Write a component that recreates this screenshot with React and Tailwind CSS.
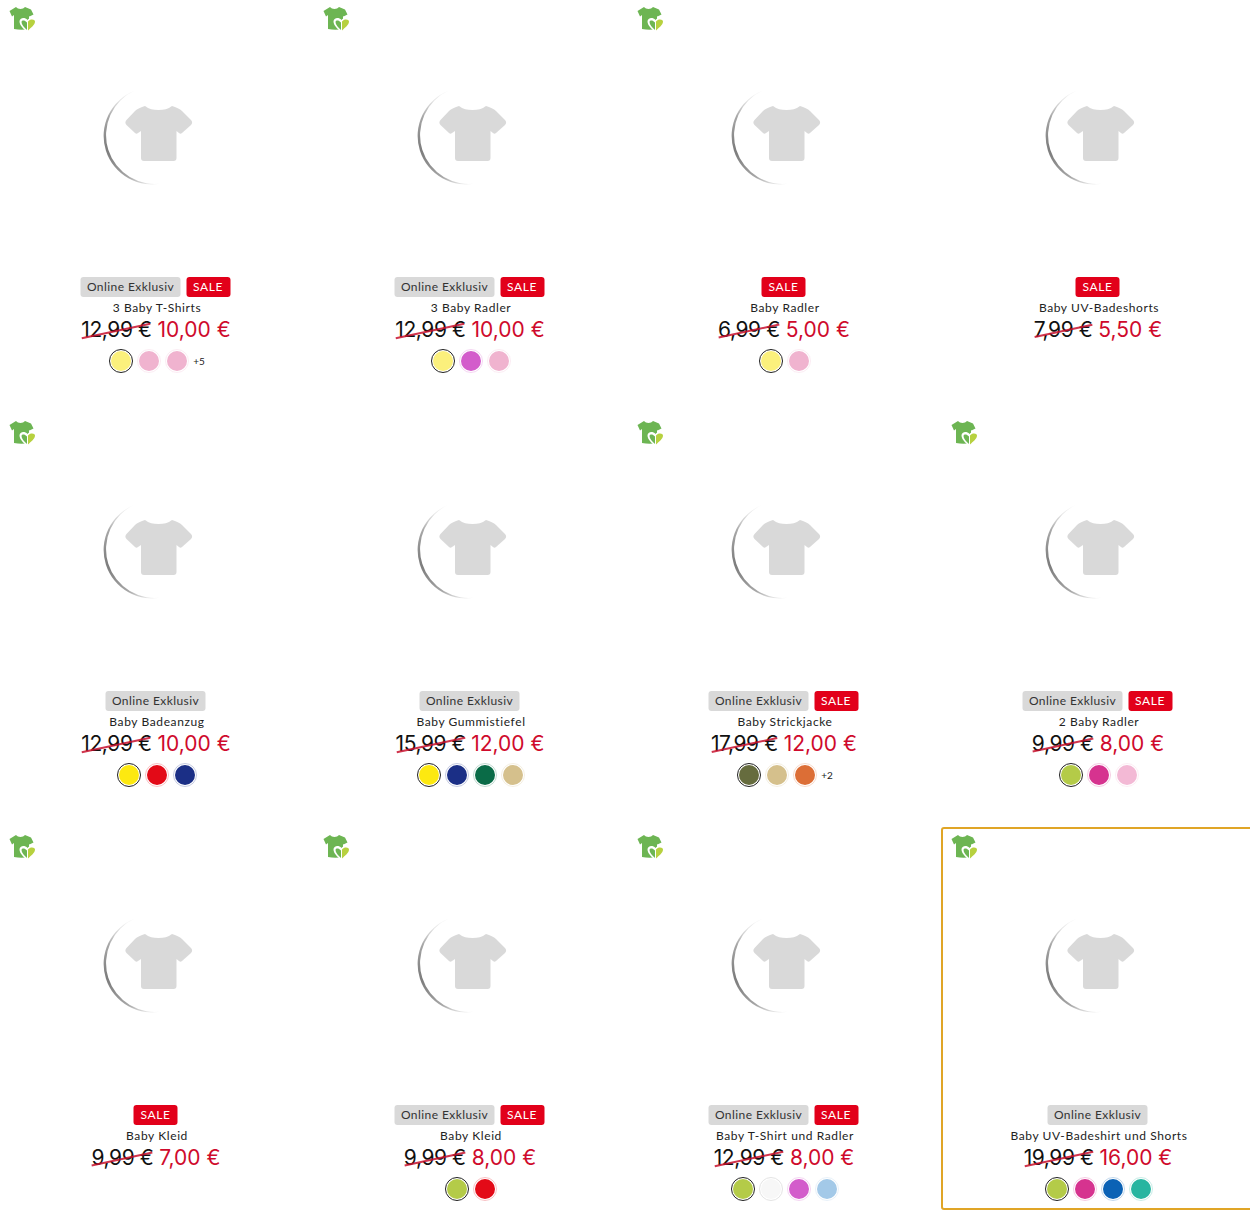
import React from "react";

const YELLOW = "#fbf07c";
const PINK = "#f0b3cf";
const ORCHID = "#d35ccb";
const LIME = "#b4cb48";
const MAGENTA = "#d6338f";
const RED = "#e30a17";
const NAVY = "#1b2f86";
const BRIGHT = "#fde910";
const TAN = "#d5c08c";
const WHITE = "#f7f7f7";

const products = [
    { logo: true, online: true, sale: true, title: "3 Baby T-Shirts", old: "12,99 €", price: "10,00 €", colors: [YELLOW, PINK, PINK], more: "+5" },
    { logo: true, online: true, sale: true, title: "3 Baby Radler", old: "12,99 €", price: "10,00 €", colors: [YELLOW, ORCHID, PINK] },
    { logo: true, sale: true, title: "Baby Radler", old: "6,99 €", price: "5,00 €", colors: [YELLOW, PINK] },
    { sale: true, title: "Baby UV-Badeshorts", old: "7,99 €", price: "5,50 €", colors: [] },
    { logo: true, online: true, title: "Baby Badeanzug", old: "12,99 €", price: "10,00 €", colors: [BRIGHT, RED, NAVY] },
    { online: true, title: "Baby Gummistiefel", old: "15,99 €", price: "12,00 €", colors: [BRIGHT, NAVY, "#0a6b47", TAN] },
    { logo: true, online: true, sale: true, title: "Baby Strickjacke", old: "17,99 €", price: "12,00 €", colors: ["#666c3e", TAN, "#dc6e36"], more: "+2" },
    { logo: true, online: true, sale: true, title: "2 Baby Radler", old: "9,99 €", price: "8,00 €", colors: [LIME, MAGENTA, "#f3b9d5"] },
    { logo: true, sale: true, title: "Baby Kleid", old: "9,99 €", price: "7,00 €", colors: [] },
    { logo: true, online: true, sale: true, title: "Baby Kleid", old: "9,99 €", price: "8,00 €", colors: [LIME, RED] },
    { logo: true, online: true, sale: true, title: "Baby T-Shirt und Radler", old: "12,99 €", price: "8,00 €", colors: [LIME, WHITE, ORCHID, "#a3c9e8"] },
    { logo: true, online: true, title: "Baby UV-Badeshirt und Shorts", old: "19,99 €", price: "16,00 €", colors: [LIME, MAGENTA, "#0b62b5", "#27b5a0"], active: true },
];

function EcoLogo() {
    return (
        <svg width="27" height="27" viewBox="0 0 27 27" className="absolute left-[8px] top-[5px]">
            <path d="M0.5 5 L7 1 C9 3.5 14 3.5 16 1 L22 3.5 L24.5 8.5 L20.5 10.5 L20 10 L20 23 C15 24 10 24 5 23 L5 9 L3 10.5 Z" fill="#6db553" />
            <path d="M18.5 26.5 C14 22.5 10.5 19 10.5 15.5 C10.5 12 15.5 10.5 18.5 14 C21.5 10.5 26.5 12 26.5 15.5 C26.5 19 23 22.5 18.5 26.5 Z" fill="#ffffff" />
            <path d="M18 24 C15 21.5 12.5 18.5 12.5 16 C12.5 14 15.5 13.5 18 16.5 Z" fill="#6db553" />
            <path d="M19 24.5 C22 21.5 26 19 26 15.5 C26 13 21 12.5 19 15.5 Z" fill="#b7d13f" />
        </svg>
    );
}

function Placeholder({ id }) {
    return (
        <svg width="100" height="100" viewBox="0 0 100 100" className="block">
            <defs>
                <radialGradient id={id} gradientUnits="userSpaceOnUse" cx="10" cy="62" r="66">
                    <stop offset="0" stopColor="#777777" />
                    <stop offset="0.5" stopColor="#a8a8a8" />
                    <stop offset="1" stopColor="#e8e8e8" stopOpacity="0" />
                </radialGradient>
            </defs>
            <path d="M33 3.6 A48.5 48.5 0 0 0 62 96 A48.74 48.74 0 0 1 33 3.6 Z" fill={`url(#${id})`} />
            <path d="M43 19 C47 22 51 23 56.5 23 C62 23 66 22 70 19 C74 20 78 22 80 24 L89 33 C90.5 35 90.5 36 89 38 L80 46 C79 47 78 47 77 46 L74.5 44 L74.5 71 C74.5 73 73.5 74 71.5 74 L42 74 C40 74 39 73 39 71 L39 44 L36 46 C35 47 34 47 33 46 L24.5 38 C23 36 23 35 24.5 33 L33 24 C35 22 39 20 43 19 Z" fill="#d9d9d9" />
        </svg>
    );
}

function Swatch({ color, selected }) {
    return (
        <span
            className={`flex h-6 w-6 items-center justify-center rounded-full ${
                selected ? "border border-[#222222]" : "border border-[#e4e4e4]"
            }`}
            style={selected || color === WHITE ? undefined : { borderColor: `${color}40` }}
        >
            <span className="h-5 w-5 rounded-full" style={{ backgroundColor: color }} />
        </span>
    );
}

function ProductCard({ product, index }) {
    return (
        <div
            className={`relative -mx-px flex h-[383px] flex-col items-center rounded-[3px] border-2 ${
                product.active ? "border-[#e0a526]" : "border-transparent"
            }`}
        >
            {product.logo && <EcoLogo />}
            <div className="flex h-[276px] w-full shrink-0 items-end justify-center pb-[90px] pr-[10px]">
                <Placeholder id={`arc-${index}`} />
            </div>
            <div className="flex h-5 -translate-x-[1.5px] gap-[6px] text-[12px] leading-5">
                {product.online && (
                    <span className="rounded-[3px] bg-[#d9d9d9] px-[6px] tracking-[0.035em] text-[#333333]">
                        Online Exklusiv
                    </span>
                )}
                {product.sale && (
                    <span className="rounded-[3px] bg-[#e2001a] px-[7px] tracking-[0.05em] text-[#ffffff]">
                        SALE
                    </span>
                )}
            </div>
            <div className="mt-[2px] text-[12px] leading-[18px] tracking-[0.05em] text-[#222222]">
                {product.title}
            </div>
            <div className="flex h-[26px] -translate-x-px items-center gap-[6px] font-['Inter',sans-serif] text-[21px] leading-[26px]">
                <span className="relative tracking-[-0.02em] text-[#111111]">
                    {product.old}
                    <span className="absolute inset-x-0 top-1/2 h-[2px] -rotate-[12deg] bg-[#c8102e]/85" />
                </span>
                <span className="text-[#cf0a2c]">{product.price}</span>
            </div>
            {product.colors.length > 0 && (
                <div className="mt-[6px] flex items-center gap-1">
                    {product.colors.map((color, i) => (
                        <Swatch key={i} color={color} selected={i === 0} />
                    ))}
                    {product.more && (
                        <span className="text-[10px] text-[#222222]">{product.more}</span>
                    )}
                </div>
            )}
        </div>
    );
}

export default function App() {
    return (
        <div className="h-[1224px] w-[1250px] overflow-hidden bg-white font-['Lato',sans-serif]">
            <div className="-mt-px grid w-[1256px] grid-cols-[repeat(4,314px)] gap-y-[31px]">
                {products.map((product, index) => (
                    <ProductCard key={index} product={product} index={index} />
                ))}
            </div>
        </div>
    );
}
